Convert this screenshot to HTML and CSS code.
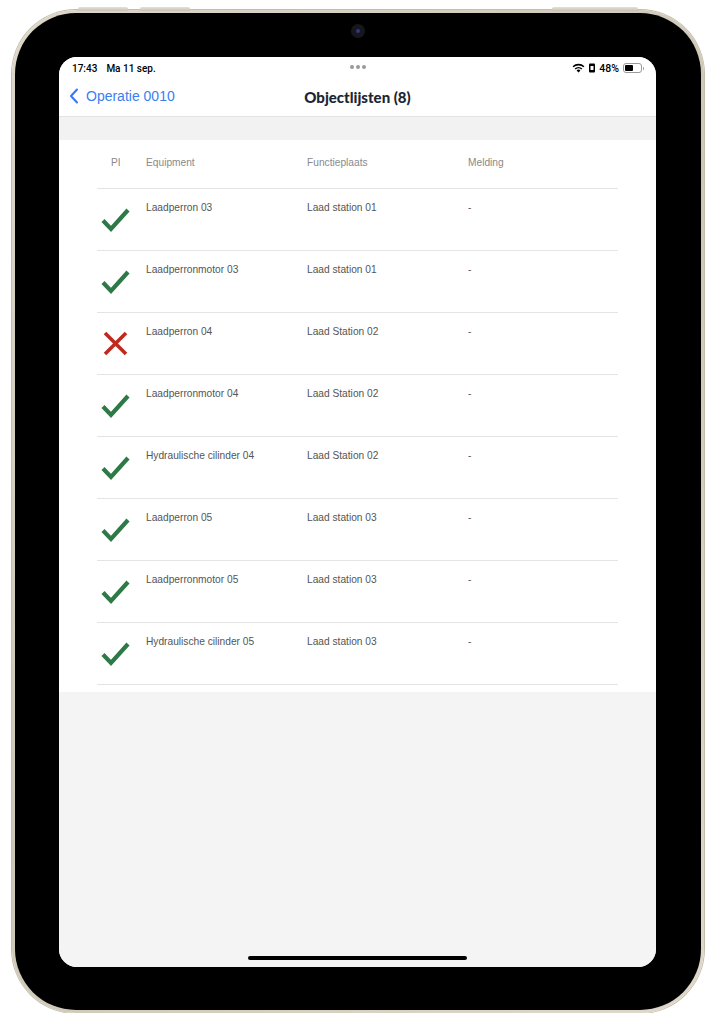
FILE: index.html
```html
<!DOCTYPE html>
<html lang="nl">
<head>
<meta charset="utf-8">
<title>Objectlijsten</title>
<link rel="stylesheet" href="styles.css">
</head>
<body>
<div class="device">
  <span class="btn btn-a"></span>
  <span class="btn btn-b"></span>
  <span class="btn btn-c"></span>
  <div class="bezel">
    <div class="camera"><span></span></div>
    <div class="screen">
      <div class="status">
        <div class="status-left"><span>17:43</span><span>Ma 11 sep.</span></div>
        <div class="status-dots"><i></i><i></i><i></i></div>
        <div class="status-right">
          <svg width="12" height="9" viewBox="0 0 12 9"><path d="M6 8.6 L4.2 6.7 A2.6 2.6 0 0 1 7.8 6.7 Z" fill="#000"/><path d="M2.9 5.4 A4.5 4.5 0 0 1 9.1 5.4" stroke="#000" stroke-width="1.4" fill="none"/><path d="M1 3.4 A7.2 7.2 0 0 1 11 3.4" stroke="#000" stroke-width="1.4" fill="none"/></svg>
          <svg width="6" height="10" viewBox="0 0 6 10"><rect x="0" y="0.5" width="6" height="9" rx="1" fill="#000"/><rect x="1.5" y="3" width="3" height="4" fill="#fff"/></svg>
          <span class="pct">48%</span>
          <span class="battery"><span class="battery-fill"></span></span>
        </div>
      </div>
      <div class="navbar">
        <a class="back"><svg width="10" height="16" viewBox="0 0 10 16"><path d="M8 1.5 L2 8 L8 14.5" stroke="#3478f6" stroke-width="2" fill="none" stroke-linecap="round" stroke-linejoin="round"/></svg><span>Operatie 0010</span></a>
        <h1 class="title">Objectlijsten (8)</h1>
      </div>
      <div class="spacer"></div>
      <div class="sheet">
        <div class="table">
          <div class="row head">
            <div class="c pi">PI</div><div class="c">Equipment</div><div class="c">Functieplaats</div><div class="c">Melding</div>
          </div>
          <div class="row">
            <div class="c pi"><svg class="ok" viewBox="0 0 30 30"><path d="M3 15.5 L11 24 L28 5" /></svg></div>
            <div class="c">Laadperron 03</div><div class="c">Laad station 01</div><div class="c">-</div>
          </div>
          <div class="row">
            <div class="c pi"><svg class="ok" viewBox="0 0 30 30"><path d="M3 15.5 L11 24 L28 5" /></svg></div>
            <div class="c">Laadperronmotor 03</div><div class="c">Laad station 01</div><div class="c">-</div>
          </div>
          <div class="row">
            <div class="c pi"><svg class="nok" viewBox="0 0 30 30"><path d="M5 4 L26 25 M26 4 L5 25" /></svg></div>
            <div class="c">Laadperron 04</div><div class="c">Laad Station 02</div><div class="c">-</div>
          </div>
          <div class="row">
            <div class="c pi"><svg class="ok" viewBox="0 0 30 30"><path d="M3 15.5 L11 24 L28 5" /></svg></div>
            <div class="c">Laadperronmotor 04</div><div class="c">Laad Station 02</div><div class="c">-</div>
          </div>
          <div class="row">
            <div class="c pi"><svg class="ok" viewBox="0 0 30 30"><path d="M3 15.5 L11 24 L28 5" /></svg></div>
            <div class="c">Hydraulische cilinder 04</div><div class="c">Laad Station 02</div><div class="c">-</div>
          </div>
          <div class="row">
            <div class="c pi"><svg class="ok" viewBox="0 0 30 30"><path d="M3 15.5 L11 24 L28 5" /></svg></div>
            <div class="c">Laadperron 05</div><div class="c">Laad station 03</div><div class="c">-</div>
          </div>
          <div class="row">
            <div class="c pi"><svg class="ok" viewBox="0 0 30 30"><path d="M3 15.5 L11 24 L28 5" /></svg></div>
            <div class="c">Laadperronmotor 05</div><div class="c">Laad station 03</div><div class="c">-</div>
          </div>
          <div class="row">
            <div class="c pi"><svg class="ok" viewBox="0 0 30 30"><path d="M3 15.5 L11 24 L28 5" /></svg></div>
            <div class="c">Hydraulische cilinder 05</div><div class="c">Laad station 03</div><div class="c">-</div>
          </div>
        </div>
      </div>
      <div class="rest"></div>
      <div class="home"></div>
    </div>
  </div>
</div>
</body>
</html>
```
FILE: styles.css
```css
* { box-sizing: border-box; }
html, body { margin: 0; padding: 0; background: #fff; }
body { font-family: "Liberation Sans", Arial, sans-serif; }

.device {
  position: relative;
  margin: 10px 0 0 12px;
  width: 692px;
  height: 1003px;
  border-radius: 64px;
  padding: 3px;
  background: linear-gradient(135deg, #dcd7c9, #cdc7b6 50%, #ddd8ca);
  box-shadow: 0 0 0 1px #c3bdac;
}
.btn {
  position: absolute;
  top: -3px;
  height: 4px;
  border-radius: 2px 2px 0 0;
  background: linear-gradient(#e4e0d4, #c8c2b2);
}
.btn-a { left: 66px; width: 50px; }
.btn-b { left: 128px; width: 50px; }
.btn-c { left: 540px; width: 86px; }

.bezel {
  position: relative;
  width: 100%;
  height: 100%;
  background: #000;
  border-radius: 61px;
  padding: 44px 45px 43px 44px;
}
.camera {
  position: absolute;
  left: 336px;
  top: 11px;
  width: 14px;
  height: 14px;
  border-radius: 50%;
  background: #16161c;
  display: flex;
  align-items: center;
  justify-content: center;
}
.camera span { width: 4px; height: 4px; border-radius: 50%; background: #2a3a8a; }

.screen {
  position: relative;
  width: 100%;
  height: 100%;
  border-radius: 18px;
  overflow: hidden;
  background: #f4f4f4;
  display: flex;
  flex-direction: column;
}

.status {
  height: 20px;
  background: #fff;
  display: flex;
  align-items: center;
  justify-content: space-between;
  padding: 2px 14px 0 13px;
  font-family: Roboto, sans-serif;
  font-size: 10px;
  font-weight: 500;
  color: #000;
  position: relative;
}
.status-left span + span { margin-left: 9px; }
.status-dots {
  position: absolute;
  left: 50%;
  top: 8px;
  transform: translateX(-50%);
  display: flex;
  gap: 2px;
}
.status-dots i { width: 4px; height: 4px; border-radius: 50%; background: #9a9a9a; }
.status-right { display: flex; align-items: center; gap: 4px; }
.status-right svg:first-child { width: 13px; height: 10px; }
.pct { font-size: 10.5px; }
.battery {
  width: 19px; height: 10px;
  border: 1px solid #9a9a9a;
  border-radius: 3px;
  padding: 1px;
  position: relative;
  display: flex;
}
.battery::after {
  content: ""; position: absolute; right: -3px; top: 3px;
  width: 1.5px; height: 3px; background: #9a9a9a; border-radius: 0 1px 1px 0;
}
.battery-fill { width: 8px; background: #000; border-radius: 1px; }

.navbar {
  height: 40px;
  background: #fff;
  border-bottom: 1px solid #e2e2e2;
  position: relative;
  display: flex;
  align-items: center;
  padding: 0 0 1px 10px;
}
.back {
  display: flex;
  align-items: center;
  gap: 7px;
  color: #3a7ef0;
  font-size: 14px;
}
.title {
  position: absolute;
  left: 0; right: 0;
  top: 11px;
  margin: 0;
  text-align: center;
  font-family: Lato, sans-serif;
  font-weight: 900;
  font-size: 15px;
  color: #1c2533;
}

.spacer { height: 23px; background: #f2f2f2; }

.sheet {
  background: #fff;
  padding: 0 38px 7px 38px;
}
.row {
  display: grid;
  grid-template-columns: 49px 161px 161px 1fr;
  height: 62px;
  border-bottom: 1px solid #e4e4e4;
  font-size: 10.2px;
  color: #555;
}
.row .c { padding-top: 13px; }
.row.head { height: 49px; color: #8a8a8a; }
.row.head .c { padding-top: 17px; }
.row.head .pi { padding-left: 14px; }
.row .pi { padding-top: 16px; padding-left: 3px; }
.row.head .pi { padding-top: 17px; }
.pi svg { width: 30px; height: 30px; display: block; }
.ok path { fill: none; stroke: #2e7a47; stroke-width: 4.2; stroke-linecap: butt; stroke-linejoin: miter; }
.nok path { fill: none; stroke: #bf2a20; stroke-width: 3.6; }

.rest { flex: 1; background: #f4f4f4; }
.home {
  position: absolute;
  left: 189px;
  bottom: 7px;
  width: 219px;
  height: 4px;
  border-radius: 2px;
  background: #000;
}
```
